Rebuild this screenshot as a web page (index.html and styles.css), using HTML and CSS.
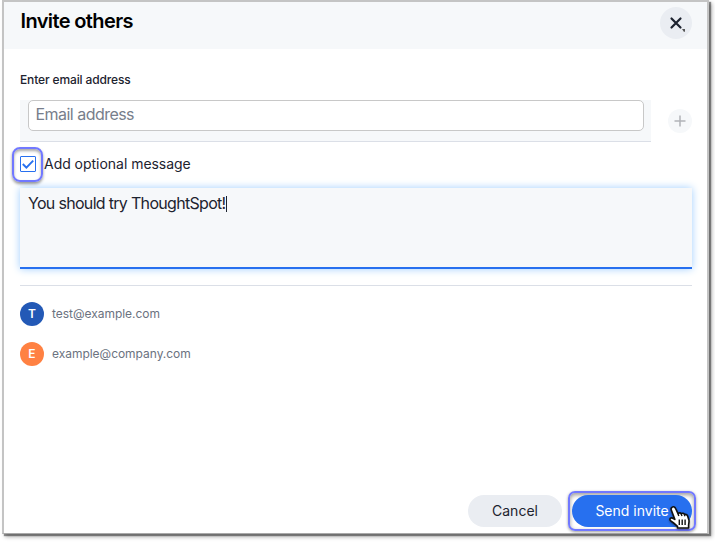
FILE: index.html
```html
<!DOCTYPE html>
<html lang="en">
<head>
<meta charset="utf-8">
<title>Invite others</title>
<link rel="stylesheet" href="styles.css">
</head>
<body>
<main class="dialog">
  <header class="header">
    <h1 class="title">Invite others</h1>
    <button class="close" aria-label="Close">
      <svg width="32" height="32" viewBox="0 0 32 32"><path d="M11.500 11.500l9 9M20.500 11.500l-9 9" stroke="#1d232f" stroke-width="2.200" stroke-linecap="round"/><path d="M22 22h3v2.500l-1 .5z" fill="#555"/></svg>
    </button>
  </header>
  <section class="content">
    <label class="label">Enter email address</label>
    <div class="email-row">
      <div class="email-wrap"><div class="email">Email address</div></div>
      <button class="add" aria-label="Add"><svg width="24" height="24" viewBox="0 0 24 24"><path d="M12 6.500v11M6.500 12h11" stroke="#b1b3b8" stroke-width="1.500"/></svg></button>
    </div>
    <div class="option">
      <div class="ring"><div class="check"><svg width="14" height="14" viewBox="0 0 14 14"><path d="M1.800 7l3.600 3.700 6.800-7" fill="none" stroke="#2770ef" stroke-width="1.900"/></svg></div></div>
      <span class="option-text">Add optional message</span>
    </div>
    <div class="message"><span>You should try ThoughtSpot!</span><i class="caret"></i></div>
    <ul class="people">
      <li class="person"><b class="avatar">T</b><span class="mail">test@example.com</span></li>
      <li class="person"><b class="avatar orange">E</b><span class="mail">example@company.com</span></li>
    </ul>
  </section>
  <footer class="footer">
    <button class="btn cancel">Cancel</button>
    <div class="send-ring"><button class="btn send">Send invite</button></div>
  </footer>
  <svg class="pointer" width="24" height="26" viewBox="0 0 24 26"><path d="M4.200 2.200C5.600 1.300 7 2 7.600 3.500l2.400 5.100c1-1 2.600-.9 3.200.2 1.100-.9 2.700-.6 3.200.6 1.200-.5 2.700.2 3.200 1.500l1.300 4c.5 1.700-.3 3.500-.3 5.600v2.500H9.500v-1.600c-1.900-1.800-3.800-3.800-6.300-5.200-1.900-1.100-1.700-3.500.6-3.300 1.200.1 2.100.8 3 1.500L3.400 5.200c-.6-1.300-.4-2.400.8-3z" fill="#fff" stroke="#111" stroke-width="1.600" stroke-linejoin="round"/><path d="M10 8.500l.8 2.500M13.200 9l.8 2M16.400 9.500l.6 1.800M11.300 14.500v5.500M14.200 14.500v5.500M17.100 14.500v5.500" stroke="#111" stroke-width="1.400" fill="none"/></svg>
</main>
</body>
</html>
```
FILE: styles.css
```css
* { box-sizing: border-box; }
body { margin: 0; width: 715px; height: 543px; overflow: hidden; background: #fff; font-family: Inter, "Liberation Sans", sans-serif; color: #1d232f; }
button { border: 0; padding: 0; font: inherit; color: inherit; }
svg { display: block; }
.dialog { position: relative; display: flex; flex-direction: column; margin: 0 0 0 2px; width: 707px; height: 534px; border: 2px solid #c4c4c4; border-bottom: 1px solid #aaa; box-shadow: 2px 2px 1px rgba(0,0,0,.4), 3px 3px 4px rgba(0,0,0,.3); background: #fff; }
.header { display: flex; justify-content: space-between; height: 47px; padding: 5px 15px 0 16.500px; background: #f6f8fa; }
.title { margin: 0; font-size: 20px; line-height: 28px; font-weight: 600; color: #000; white-space: nowrap; letter-spacing: -.62px; }
.close { width: 32px; height: 32px; border-radius: 50%; background: #eaedf2; }
.content { flex: 1; padding: 21px 15px 0 16px; }
.label { display: block; height: 30px; font-size: 12px; line-height: 20px; font-weight: 500; letter-spacing: -.13px; }
.email-row { display: flex; justify-content: space-between; align-items: center; height: 42px; }
.email-wrap { width: 631px; height: 42px; padding: 0 7px 0 8px; background: #f6f8fa; border-bottom: 1px solid #dbdfe7; }
.email { height: 31px; border: 1px solid #c8c8c8; border-radius: 5px; background: #fff; padding-left: 6.500px; font-size: 16px; line-height: 27px; color: #777e8b; letter-spacing: -.53px; }
.add { width: 24px; height: 24px; border-radius: 50%; background: #f6f8fa; }
.option { display: flex; align-items: center; height: 44px; margin: 0 0 2px -8px; font-size: 14px; }
.ring { width: 31px; height: 35px; flex: none; display: grid; place-items: center; border: 2px solid #7178ff; border-radius: 8px; box-shadow: 0 2px 3px rgba(0,0,0,.4), inset 0 2px 3px rgba(0,0,0,.35); }
.check { width: 16px; height: 16px; border: 1px solid #2770ef; border-radius: 1px; background: #fff; }
.option-text { margin: -2px 0 0 1px; letter-spacing: -.03px; }
.message { display: flex; height: 81px; padding: 4px 8px; background: #f6f8fa; border-bottom: 2px solid #2770ef; box-shadow: 0 0 8px #9fceff; font-size: 16px; line-height: 22px; letter-spacing: -.69px; }
.caret { width: 1px; height: 16px; margin-top: 4px; background: #1d232f; }
.people { list-style: none; margin: 16px 0 0; padding: 16px 0 0; border-top: 1px solid #dbdfe7; }
.person { display: flex; align-items: center; gap: 8px; height: 24px; margin-bottom: 16px; font-size: 12px; color: #6b7280; }
.mail { margin-top: -2px; letter-spacing: -.03px; }
.avatar { width: 24px; height: 24px; border-radius: 50%; background: #2359b6; color: #fff; text-align: center; line-height: 24px; font-size: 12px; font-weight: 600; }
.orange { background: #ff8142; }
.footer { display: flex; justify-content: flex-end; align-items: center; gap: 6px; height: 44px; padding-right: 11px; }
.btn { height: 32px; border-radius: 16px; font-size: 14px; padding-bottom: 2px; }
.cancel { width: 94px; background: #eaedf2; }
.send-ring { width: 128px; height: 40px; padding: 2px; border: 2px solid #7178ff; border-radius: 7px; box-shadow: 0 1px 3px rgba(0,0,0,.4), inset 0 2px 4px rgba(0,0,0,.4); }
.send { width: 120px; background: #2770ef; color: #fff; }
.pointer { position: absolute; left: 664px; top: 503px; filter: drop-shadow(0 1px 1px rgba(0,0,0,.4)); }
```
